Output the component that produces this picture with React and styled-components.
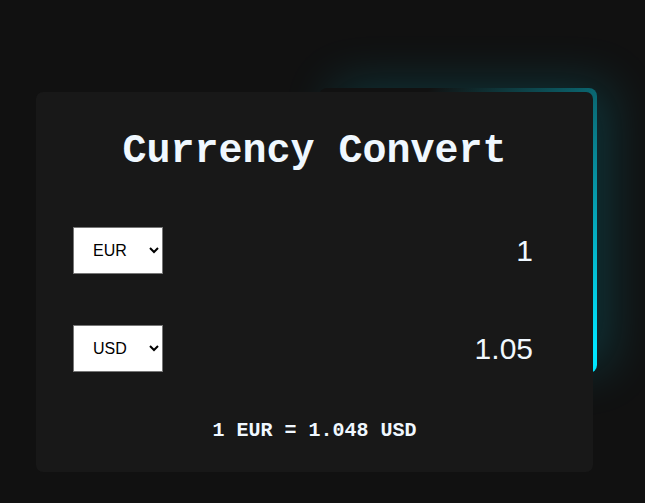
import styled, { createGlobalStyle } from "styled-components"

const GlobalStyle = createGlobalStyle`
  html, body {
    margin: 0;
    padding: 0;
    background: #111111;
  }
  * {
    box-sizing: border-box;
  }
`

const Page = styled.div`
  width: 100%;
  min-height: 100vh;
  padding: 92px 0 0 36px;
  background: #111111;
`

// holds the cyan glow behind the card
const Frame = styled.div`
  position: relative;
  z-index: 0;
  width: 557px;

  &::before {
    content: "";
    position: absolute;
    z-index: -1;
    top: -4px;
    right: -4px;
    width: 50%;
    height: 75%;
    border-radius: 8px;
    background: linear-gradient(to bottom right, transparent 20%, #00e5ff 95%);
    box-shadow: 14px -4px 50px rgba(0, 190, 215, 0.2);
  }
`

const Card = styled.div`
  position: relative;
  height: 380px;
  padding: 40px 0 0;
  display: flex;
  flex-direction: column;
  background: #181818;
  border-radius: 7px;
`

const Title = styled.h1`
  margin: 0;
  font-family: "Liberation Mono", "Courier New", monospace;
  font-size: 40px;
  font-weight: 700;
  line-height: 40px;
  color: aliceblue;
  text-align: center;
`

const Row = styled.div`
  display: flex;
  align-items: center;
  justify-content: space-between;
  height: 47px;
  margin-top: ${(p) => p.$gap}px;
  padding: 0 60px 0 37px;
`

const CurrencySelect = styled.select`
  width: 90px;
  height: 47px;
  padding: 0 8px 0 15px;
  font-family: "Liberation Sans", Arial, sans-serif;
  font-size: 16px;
  color: #000;
  background: #fff;
  border: 1px solid #767676;
  border-radius: 0;
`

const Amount = styled.input`
  width: 200px;
  padding: 0;
  font-family: "Liberation Sans", Arial, sans-serif;
  font-size: 30px;
  color: aliceblue;
  text-align: right;
  background: transparent;
  border: none;
  outline: none;
`

const Rate = styled.p`
  margin: 49px 0 0;
  font-family: "Liberation Mono", "Courier New", monospace;
  font-size: 20px;
  font-weight: 700;
  line-height: 20px;
  color: aliceblue;
  text-align: center;
`

export default function App() {
  return (
    <Page>
      <GlobalStyle />
      <Frame>
        <Card>
          <Title>Currency Convert</Title>

          <Row $gap={55}>
            <CurrencySelect defaultValue="EUR">
              <option value="EUR">EUR</option>
              <option value="USD">USD</option>
            </CurrencySelect>
            <Amount type="text" defaultValue="1" />
          </Row>

          <Row $gap={51}>
            <CurrencySelect defaultValue="USD">
              <option value="EUR">EUR</option>
              <option value="USD">USD</option>
            </CurrencySelect>
            <Amount type="text" defaultValue="1.05" readOnly />
          </Row>

          <Rate>1 EUR = 1.048 USD</Rate>
        </Card>
      </Frame>
    </Page>
  )
}
